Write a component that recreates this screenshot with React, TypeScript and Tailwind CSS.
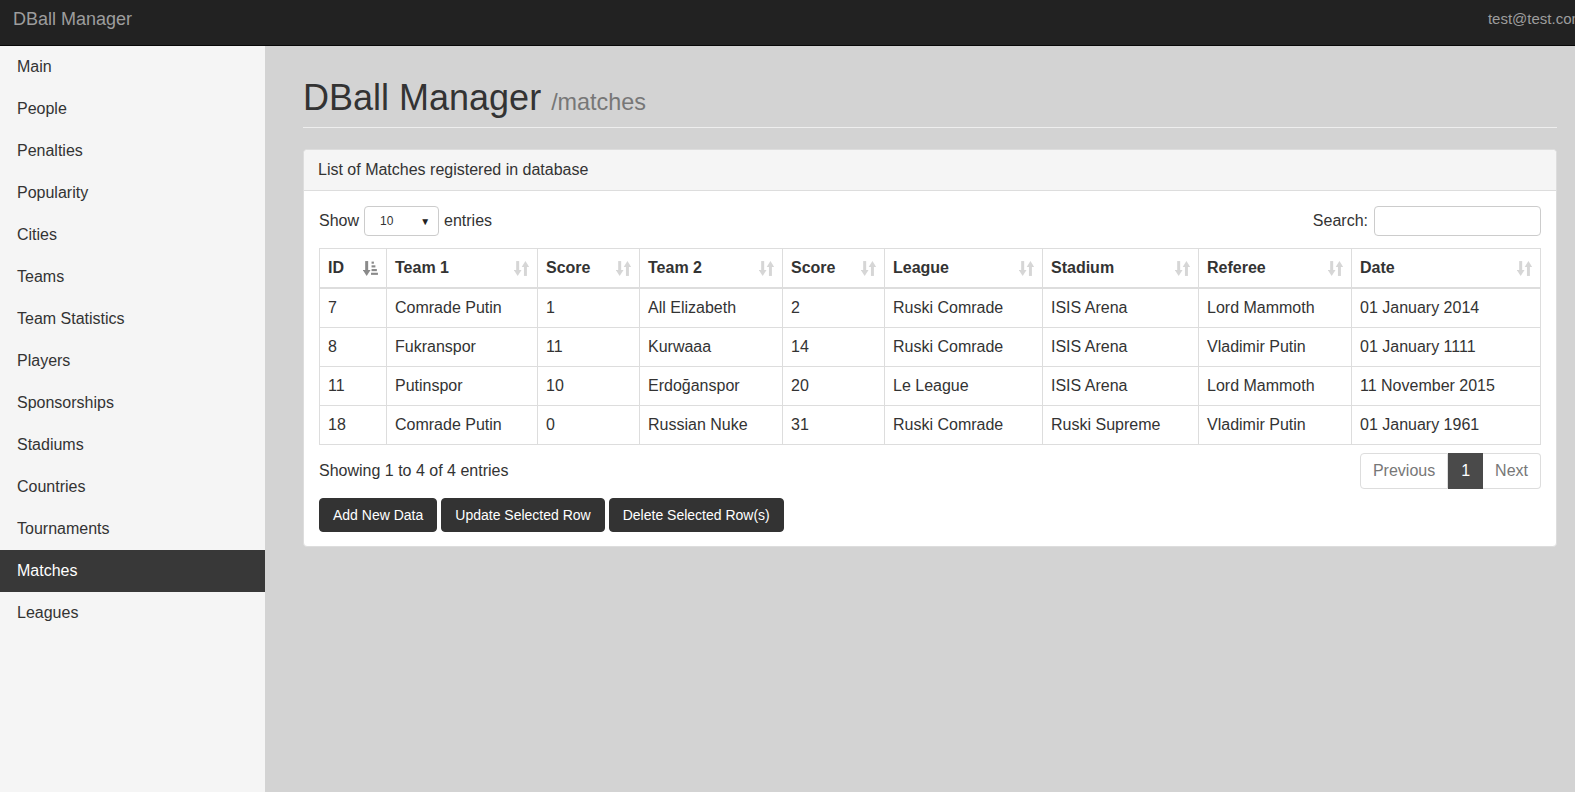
import React from "react";

const menu = [
	"Main",
	"People",
	"Penalties",
	"Popularity",
	"Cities",
	"Teams",
	"Team Statistics",
	"Players",
	"Sponsorships",
	"Stadiums",
	"Countries",
	"Tournaments",
	"Matches",
	"Leagues",
];

const columns = [
	{ label: "ID", w: "w-[67px]", sorted: true },
	{ label: "Team 1", w: "w-[151px]" },
	{ label: "Score", w: "w-[102px]" },
	{ label: "Team 2", w: "w-[143px]" },
	{ label: "Score", w: "w-[102px]" },
	{ label: "League", w: "w-[158px]" },
	{ label: "Stadium", w: "w-[156px]" },
	{ label: "Referee", w: "w-[153px]" },
	{ label: "Date", w: "" },
];

const rows = [
	["7", "Comrade Putin", "1", "All Elizabeth", "2", "Ruski Comrade", "ISIS Arena", "Lord Mammoth", "01 January 2014"],
	["8", "Fukranspor", "11", "Kurwaaa", "14", "Ruski Comrade", "ISIS Arena", "Vladimir Putin", "01 January 1111"],
	["11", "Putinspor", "10", "Erdoğanspor", "20", "Le League", "ISIS Arena", "Lord Mammoth", "11 November 2015"],
	["18", "Comrade Putin", "0", "Russian Nuke", "31", "Ruski Comrade", "Ruski Supreme", "Vladimir Putin", "01 January 1961"],
];

function SortIcon({ sorted }: { sorted?: boolean }) {
	if (sorted) {
		return (
			<svg width="15" height="17" viewBox="0 0 14 16" className="text-[#8a8a8a]">
				<rect x="2" y="1" width="2.8" height="9" fill="currentColor" />
				<polygon points="-0.2,9.5 7,9.5 3.4,15" fill="currentColor" />
				<rect x="8" y="1.5" width="2.2" height="2" fill="currentColor" />
				<rect x="8" y="5" width="3.6" height="2" fill="currentColor" />
				<rect x="8" y="8.5" width="5" height="2" fill="currentColor" />
				<rect x="7.5" y="12" width="6.5" height="2" fill="currentColor" />
			</svg>
		);
	}
	return (
		<svg width="15" height="17" viewBox="0 0 14 16" className="text-[#d6d6d6]">
			<rect x="2" y="1" width="2.8" height="9" fill="currentColor" />
			<polygon points="-0.2,9.5 7,9.5 3.4,15" fill="currentColor" />
			<polygon points="7.2,6.5 14.2,6.5 10.7,1" fill="currentColor" />
			<rect x="9.3" y="6" width="2.8" height="9" fill="currentColor" />
		</svg>
	);
}

function MatchesTable() {
	return (
		<table className="mt-[12px] w-full border-collapse border border-[#ddd] text-[16px] leading-[22px]">
			<thead>
				<tr>
					{columns.map((c, i) => (
						<th
							key={i}
							className={`${c.w} border border-[#ddd] border-b-2 px-2 py-2 text-left font-bold`}
						>
							<div className="flex items-center justify-between">
								<span>{c.label}</span>
								<SortIcon sorted={c.sorted} />
							</div>
						</th>
					))}
				</tr>
			</thead>
			<tbody>
				{rows.map((r, i) => (
					<tr key={i}>
						{r.map((cell, j) => (
							<td key={j} className="border border-[#ddd] px-2 py-2">
								{cell}
							</td>
						))}
					</tr>
				))}
			</tbody>
		</table>
	);
}

function Pagination() {
	return (
		<div className="flex h-[36px] text-[16px] leading-[22px]">
			<span className="rounded-l-[4px] border border-[#ddd] px-3 py-[6px] text-[#777]">Previous</span>
			<span className="border border-[#4a4a4a] bg-[#4a4a4a] px-3 py-[6px] text-white">1</span>
			<span className="rounded-r-[4px] border border-[#ddd] border-l-0 px-3 py-[6px] text-[#777]">Next</span>
		</div>
	);
}

function App() {
	return (
		<div className="min-h-screen w-full bg-[#d3d3d3] font-['Liberation_Sans',Arial,sans-serif] text-[16px] text-[#333]">
			<nav className="flex h-[46px] overflow-hidden border-b border-[#080808] bg-[#222]">
				<span className="ml-[13px] mt-[9px] text-[18px] leading-[20px] text-[#9d9d9d]">DBall Manager</span>
				<span className="ml-auto mr-[-9px] mt-[9px] shrink-0 text-[15px] leading-[20px] text-[#9d9d9d]">
					test@test.com
				</span>
			</nav>
			<div className="flex min-h-[746px]">
				<aside className="w-[265px] shrink-0 bg-[#f5f5f5]">
					<ul>
						{menu.map((m) => (
							<li
								key={m}
								className={`pl-[17px] py-[10px] leading-[22px] ${
									m === "Matches" ? "bg-[#383838] text-white" : "text-[#333]"
								}`}
							>
								{m}
							</li>
						))}
					</ul>
				</aside>
				<main className="flex-1 pl-[38px] pr-[18px]">
					<div className="mt-[32px] border-b border-[#eee] pb-[5px]">
						<h1 className="text-[36px] leading-[40px] text-[#333]">
							DBall Manager <span className="text-[23.4px] text-[#777]">/matches</span>
						</h1>
					</div>
					<div className="mt-[21px] rounded-[4px] border border-[#ddd] bg-white">
						<div className="rounded-t-[4px] border-b border-[#ddd] bg-[#f5f5f5] px-[14px] py-[10px] leading-[20px]">
							List of Matches registered in database
						</div>
						<div className="px-[15px] pb-[14px] pt-[15px]">
							<div className="flex h-[30px] items-center justify-between">
								<div className="flex items-center">
									<span>Show</span>
									<div className="mx-[5px] flex h-[30px] w-[75px] items-center justify-between rounded-[4px] border border-[#ccc] pl-[15px] pr-[8px] text-[12px]">
										<span>10</span>
										<span className="text-[10px] text-[#222]">▼</span>
									</div>
									<span>entries</span>
								</div>
								<div className="flex items-center">
									<span>Search:</span>
									<div className="ml-[6px] h-[30px] w-[167px] rounded-[4px] border border-[#ccc]" />
								</div>
							</div>
							<MatchesTable />
							<div className="mt-[8px] flex items-center justify-between">
								<span>Showing 1 to 4 of 4 entries</span>
								<Pagination />
							</div>
							<div className="mt-[9px] flex gap-[4px] text-[14px] leading-[20px] text-white">
								<button className="rounded-[4px] border border-[#333] bg-[#333] px-[13px] py-[6px]">Add New Data</button>
								<button className="rounded-[4px] border border-[#333] bg-[#333] px-[13px] py-[6px]">Update Selected Row</button>
								<button className="rounded-[4px] border border-[#333] bg-[#333] px-[13px] py-[6px]">Delete Selected Row(s)</button>
							</div>
						</div>
					</div>
				</main>
			</div>
		</div>
	);
}

export default App;
